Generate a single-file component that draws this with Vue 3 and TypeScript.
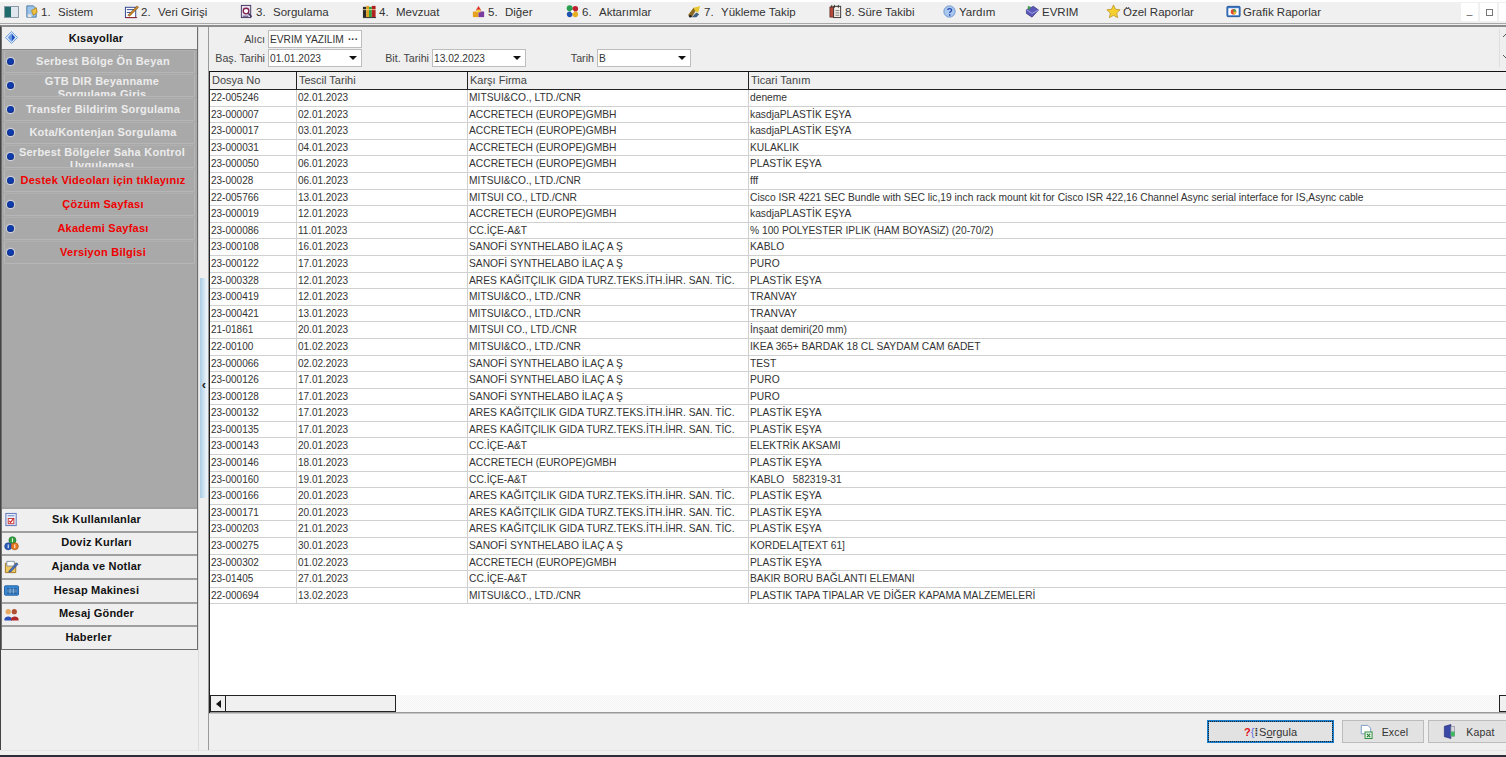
<script setup lang="ts">
interface MenuItem {
  icon: string
  num?: string
  label: string
}

interface Row {
  file: string
  date: string
  firm: string
  desc: string
}

const menu: MenuItem[] = [
  { icon: 'sistem', num: '1.', label: 'Sistem' },
  { icon: 'veri', num: '2.', label: 'Veri Girişi' },
  { icon: 'sorgu', num: '3.', label: 'Sorgulama' },
  { icon: 'mevzuat', num: '4.', label: 'Mevzuat' },
  { icon: 'diger', num: '5.', label: 'Diğer' },
  { icon: 'aktar', num: '6.', label: 'Aktarımlar' },
  { icon: 'yukleme', num: '7.', label: 'Yükleme Takip' },
  { icon: 'sure', label: '8. Süre Takibi' },
  { icon: 'yardim', label: 'Yardım' },
  { icon: 'evrim', label: 'EVRIM' },
  { icon: 'star', label: 'Özel Raporlar' },
  { icon: 'grafik', label: 'Grafik Raporlar' },
]

const shortcuts = [
  { label: 'Serbest Bölge Ön Beyan' },
  { label: 'GTB DIR Beyanname Sorgulama Giriş', clip: true },
  { label: 'Transfer Bildirim Sorgulama' },
  { label: 'Kota/Kontenjan Sorgulama' },
  { label: 'Serbest Bölgeler Saha Kontrol Uygulaması', clip: true },
  { label: 'Destek Videoları için tıklayınız', red: true },
  { label: 'Çözüm Sayfası', red: true },
  { label: 'Akademi Sayfası', red: true },
  { label: 'Versiyon Bilgisi', red: true },
]

const tools = [
  { icon: 'sik', label: 'Sık Kullanılanlar' },
  { icon: 'doviz', label: 'Doviz Kurları' },
  { icon: 'ajanda', label: 'Ajanda ve Notlar' },
  { icon: 'hesap', label: 'Hesap Makinesi' },
  { icon: 'mesaj', label: 'Mesaj Gönder' },
  { icon: '', label: 'Haberler' },
]

const MITSUI = 'MITSUI&CO., LTD./CNR'
const MITSUI2 = 'MITSUI CO., LTD./CNR'
const ACC = 'ACCRETECH (EUROPE)GMBH'
const SAN = 'SANOFİ SYNTHELABO İLAÇ A Ş'
const ARES = 'ARES KAĞITÇILIK GIDA TURZ.TEKS.İTH.İHR. SAN. TİC.'
const CC = 'CC.İÇE-A&T'
const PE = 'PLASTİK EŞYA'

const rows: Row[] = [
  { file: '22-005246', date: '02.01.2023', firm: MITSUI, desc: 'deneme' },
  { file: '23-000007', date: '02.01.2023', firm: ACC, desc: 'kasdjaPLASTİK EŞYA' },
  { file: '23-000017', date: '03.01.2023', firm: ACC, desc: 'kasdjaPLASTİK EŞYA' },
  { file: '23-000031', date: '04.01.2023', firm: ACC, desc: 'KULAKLIK' },
  { file: '23-000050', date: '06.01.2023', firm: ACC, desc: PE },
  { file: '23-00028', date: '06.01.2023', firm: MITSUI, desc: 'fff' },
  { file: '22-005766', date: '13.01.2023', firm: MITSUI2, desc: 'Cisco ISR 4221 SEC Bundle with SEC lic,19 inch rack mount kit for Cisco ISR 422,16 Channel Async serial interface for IS,Async cable' },
  { file: '23-000019', date: '12.01.2023', firm: ACC, desc: 'kasdjaPLASTİK EŞYA' },
  { file: '23-000086', date: '11.01.2023', firm: CC, desc: '% 100 POLYESTER IPLIK (HAM BOYASiZ) (20-70/2)' },
  { file: '23-000108', date: '16.01.2023', firm: SAN, desc: 'KABLO' },
  { file: '23-000122', date: '17.01.2023', firm: SAN, desc: 'PURO' },
  { file: '23-000328', date: '12.01.2023', firm: ARES, desc: PE },
  { file: '23-000419', date: '12.01.2023', firm: MITSUI, desc: 'TRANVAY' },
  { file: '23-000421', date: '13.01.2023', firm: MITSUI, desc: 'TRANVAY' },
  { file: '21-01861', date: '20.01.2023', firm: MITSUI2, desc: 'İnşaat demiri(20 mm)' },
  { file: '22-00100', date: '01.02.2023', firm: MITSUI, desc: 'IKEA 365+ BARDAK 18 CL SAYDAM CAM 6ADET' },
  { file: '23-000066', date: '02.02.2023', firm: SAN, desc: 'TEST' },
  { file: '23-000126', date: '17.01.2023', firm: SAN, desc: 'PURO' },
  { file: '23-000128', date: '17.01.2023', firm: SAN, desc: 'PURO' },
  { file: '23-000132', date: '17.01.2023', firm: ARES, desc: PE },
  { file: '23-000135', date: '17.01.2023', firm: ARES, desc: PE },
  { file: '23-000143', date: '20.01.2023', firm: CC, desc: 'ELEKTRİK AKSAMI' },
  { file: '23-000146', date: '18.01.2023', firm: ACC, desc: PE },
  { file: '23-000160', date: '19.01.2023', firm: CC, desc: 'KABLO   582319-31' },
  { file: '23-000166', date: '20.01.2023', firm: ARES, desc: PE },
  { file: '23-000171', date: '20.01.2023', firm: ARES, desc: PE },
  { file: '23-000203', date: '21.01.2023', firm: ARES, desc: PE },
  { file: '23-000275', date: '30.01.2023', firm: SAN, desc: 'KORDELA[TEXT 61]' },
  { file: '23-000302', date: '01.02.2023', firm: ACC, desc: PE },
  { file: '23-01405', date: '27.01.2023', firm: CC, desc: 'BAKIR BORU BAĞLANTI ELEMANI' },
  { file: '22-000694', date: '13.02.2023', firm: MITSUI, desc: 'PLASTIK TAPA TIPALAR VE DİĞER KAPAMA MALZEMELERİ' },
]

// 16x16 hand drawn toolbar glyphs
const icons: Record<string, string> = {
  sistem: '<path d="M3 2h7l3 3v9H3z" fill="#9cc4ea" stroke="#4a78a8"/><path d="M8 7l5-3 1 5-4 3z" fill="#f0c040" stroke="#b58a20"/><rect x="4" y="11" width="4" height="3" fill="#e6e6e6"/>',
  veri: '<rect x="1.5" y="3.5" width="11" height="11" fill="#fff" stroke="#2c3f8c"/><path d="M3 6h8M3 9h5" stroke="#2c3f8c"/><path d="M4 12L14 2l1.5 1.5L6 13z" fill="#c8862c" stroke="#7a4a10" stroke-width=".6"/><path d="M2 14.5h12" stroke="#a02020"/>',
  sorgu: '<rect x="2.5" y="1.5" width="10" height="13" fill="#e8e2f0" stroke="#403060"/><circle cx="7.5" cy="7.5" r="3" fill="#fff" stroke="#802050" stroke-width="1.4"/><path d="M10 10l3.5 3.5" stroke="#403060" stroke-width="1.6"/><path d="M4 13h6" stroke="#403060"/>',
  mevzuat: '<rect x="1" y="3" width="3.5" height="11" fill="#2a2a2a"/><rect x="4.5" y="2" width="3" height="12" fill="#e0a020"/><rect x="7.5" y="3" width="3" height="11" fill="#30a040"/><rect x="10.5" y="2" width="4" height="12" fill="#b02020"/><path d="M1 14.5h14" stroke="#222"/><path d="M1 6h14" stroke="#f4e8a0" stroke-width=".8"/>',
  diger: '<path d="M8 2l3 5H5z" fill="#e23030"/><rect x="2" y="8" width="6" height="6" fill="#e8a020"/><rect x="8" y="8" width="6" height="6" fill="#7a3aa0"/><rect x="6" y="6" width="4" height="3" fill="#f4d040"/>',
  aktar: '<circle cx="5" cy="4.5" r="3.2" fill="#28a050"/><circle cx="11" cy="5" r="3" fill="#c02030"/><circle cx="5" cy="11" r="3" fill="#2050b0"/><circle cx="11" cy="11" r="3" fill="#e8b020"/><circle cx="8" cy="8" r="1.6" fill="#fff"/>',
  yukleme: '<path d="M1 12l6-8 3 2-5 8z" fill="#8a6a20"/><path d="M7 4l7-2-2 7-3-1z" fill="#e8c830"/><path d="M5 14l5-5 3 2-3 3z" fill="#406080"/><circle cx="3.5" cy="13" r="1.4" fill="#202020"/>',
  sure: '<path d="M2 3h4v11H2z" fill="#b84a3a" stroke="#4a2018" stroke-width=".7"/><rect x="6" y="2.5" width="7.5" height="12" fill="#f4f0e8" stroke="#3a3030"/><path d="M4 1v3M7 1v3M11 1v3" stroke="#333"/><path d="M8 7h4M8 9.5h4M8 12h4" stroke="#777"/>',
  yardim: '<circle cx="8" cy="8" r="6" fill="#a8c8f0" stroke="#6a90c8"/><path d="M6 6.4c.3-2 4.4-2 4.2.2 0 1.5-2 1.4-2 3" fill="none" stroke="#2848a8" stroke-width="1.4"/><circle cx="8.2" cy="11.6" r=".9" fill="#2848a8"/>',
  evrim: '<path d="M1.5 6L9 2.5l5.5 4-7 7.5-6-4z" fill="#5a58b8" stroke="#2e2c70" stroke-width=".7"/><path d="M1.5 6l6 4 7-3.5" fill="none" stroke="#a8a8e8"/><path d="M3 2l3 1-1 3-2-1z" fill="#3a9a4a"/>',
  star: '<path d="M8 1l2.1 4.6 5 .6-3.7 3.4 1 5L8 12.1l-4.4 2.5 1-5L.9 6.2l5-.6z" fill="#f6d030" stroke="#b89020" stroke-width=".8"/>',
  grafik: '<rect x="1" y="2.5" width="14" height="11" rx="1" fill="#3a78c8" stroke="#285a98"/><rect x="2.5" y="4.5" width="11" height="7.5" fill="#fff"/><circle cx="8" cy="8.2" r="3" fill="#e04830"/><path d="M8 8.2V5.2a3 3 0 0 1 3 3z" fill="#40a850"/><path d="M8 8.2h3a3 3 0 0 1-3 3z" fill="#e8c030"/>',
  sik: '<rect x="2" y="1.5" width="11" height="13" fill="#e8eef8" stroke="#5a70b8"/><path d="M4 4h7" stroke="#6080c8"/><rect x="4.5" y="7" width="6" height="5.5" fill="#fff" stroke="#c03030"/><path d="M5.5 9.5l1.5 1.5 3.5-4.5" fill="none" stroke="#d02020" stroke-width="1.2"/>',
  doviz: '<circle cx="9" cy="4.5" r="3.8" fill="#30a040" stroke="#186828" stroke-width=".6"/><circle cx="4.5" cy="11" r="3.8" fill="#2a5ab8" stroke="#183a80" stroke-width=".6"/><circle cx="11.5" cy="11" r="3.8" fill="#e87820" stroke="#a04a10" stroke-width=".6"/><path d="M9 2.5v4M4.5 9v4M11.5 9v4" stroke="#fff"/>',
  ajanda: '<path d="M1.5 4.5h11v10h-11z" fill="#f0c860" stroke="#a07820"/><path d="M3 2.5h8v5H3z" fill="#fff" stroke="#8090a0"/><path d="M6 12l7.5-8 1.5 1.5-7.5 8L5 14z" fill="#4a70c0" stroke="#283c78" stroke-width=".6"/>',
  hesap: '<rect x=".5" y="3" width="15" height="10" rx="1" fill="#3888d8" stroke="#2060a0"/><rect x="3" y="5.5" width="11" height="6" fill="#205a98"/><path d="M3 7.5h11M3 9.5h11M6.5 5.5v6M10 5.5v6" stroke="#a8d0f0" stroke-width=".7"/>',
  mesaj: '<circle cx="4.5" cy="5" r="2.8" fill="#e8a860"/><path d="M.5 13c0-4 8-4 8 0v1.5h-8z" fill="#2a50b8"/><circle cx="11" cy="5" r="2.8" fill="#b05030"/><path d="M7.5 13c0-4 8-4 8 0v1.5h-8z" fill="#b02828"/>',
  excel: '<path d="M3.5 1.5h7l3 3v6h-10z" fill="#fff" stroke="#7a9ac8"/><rect x="7.5" y="8.5" width="7.5" height="7" fill="#e8f4e8" stroke="#2a8a3a"/><path d="M9.5 10.5l3.5 3.5M13 10.5L9.5 14" stroke="#208030" stroke-width="1.2"/>',
  kapat: '<path d="M2.5 2.5l7-2v15l-7-2z" fill="#3a48a8" stroke="#20286a" stroke-width=".6"/><rect x="9.5" y="2.5" width="4" height="11" fill="#d8d8e0" stroke="#7a7a90" stroke-width=".6"/><rect x="9.5" y="8" width="4" height="5" fill="#40b860"/>',
}
</script>

<template>
  <div class="app">
    <header class="menubar">
      <span class="win-icon"><i /></span>
      <nav class="menu">
        <a v-for="item in menu" :key="item.label" class="menu-item">
          <svg class="ico" viewBox="0 0 16 16" v-html="icons[item.icon]" />
          <span v-if="item.num" class="menu-num">{{ item.num }}</span>
          <span>{{ item.label }}</span>
        </a>
      </nav>
      <div class="win-btns">
        <span>_</span>
        <span class="restore" />
        <span />
      </div>
    </header>

    <main class="body">
      <aside class="sidebar">
        <div class="side-head">
          <svg class="diamond" viewBox="0 0 14 14">
            <path d="M7 .5L13.5 7 7 13.5.5 7z" fill="#d8e8fa" stroke="#6a9ad8" />
            <path d="M7 2.5L11 7l-4 4.5z" fill="#1c50c0" />
            <path d="M7 2.5L3 7l4 4.5z" fill="#6a98e0" />
          </svg>
          Kısayollar
        </div>
        <div class="side-list">
          <a
            v-for="s in shortcuts"
            :key="s.label"
            class="side-item"
            :class="{ red: s.red, clip: s.clip }"
          >
            <span class="bullet" />
            <span class="side-text">{{ s.label }}</span>
          </a>
        </div>
        <div class="side-tools">
          <a v-for="t in tools" :key="t.label" class="tool" :class="{ bare: !t.icon }">
            <svg v-if="t.icon" class="tool-ico" viewBox="0 0 16 16" v-html="icons[t.icon]" />
            <span>{{ t.label }}</span>
          </a>
        </div>
      </aside>

      <div class="splitter">
        <div class="split-track"><span class="chev">‹</span></div>
      </div>

      <section class="panel">
        <form class="filters" @submit.prevent>
          <div class="filter-row">
            <label class="lbl-first">Alıcı</label>
            <div class="field"><span class="val">EVRIM YAZILIM</span><span class="dots">···</span></div>
          </div>
          <div class="filter-row">
            <label class="lbl-first">Baş. Tarihi</label>
            <div class="field"><span class="val">01.01.2023</span><span class="arrow" /></div>
            <label class="lbl-bit">Bit. Tarihi</label>
            <div class="field"><span class="val">13.02.2023</span><span class="arrow" /></div>
            <label class="lbl-tarih">Tarih</label>
            <div class="field"><span class="val">B</span><span class="arrow" /></div>
          </div>
          <div class="spin">
            <svg viewBox="0 0 8 34" width="8" height="34">
              <path d="M1 8l3-3 3 3M1 26l3 3 3-3" fill="none" stroke="#555" />
            </svg>
          </div>
        </form>

        <div class="grid">
          <div class="grid-head">
            <div class="cell">Dosya No</div>
            <div class="cell">Tescil Tarihi</div>
            <div class="cell">Karşı Firma</div>
            <div class="cell">Ticari Tanım</div>
          </div>
          <div class="grid-body">
            <div v-for="r in rows" :key="r.file" class="grid-row">
              <div class="cell num">{{ r.file }}</div>
              <div class="cell num">{{ r.date }}</div>
              <div class="cell">{{ r.firm }}</div>
              <div class="cell desc">{{ r.desc }}</div>
            </div>
          </div>
          <div class="hscroll">
            <span class="sb-btn"><i class="tri-l" /></span>
            <span class="sb-thumb" />
            <span class="sb-btn end" />
          </div>
        </div>

        <footer class="actions">
          <button class="btn primary" type="button">
            <span class="q">?</span><span class="brace">{</span><span class="pipe">⁞</span>
            <span>S<u>o</u>rgula</span>
          </button>
          <button class="btn excel" type="button">
            <svg class="ico" viewBox="0 0 16 16" v-html="icons.excel" />
            <span>Excel</span>
          </button>
          <button class="btn last" type="button">
            <svg class="ico" viewBox="0 0 16 16" v-html="icons.kapat" />
            <span>Kapat</span>
          </button>
        </footer>
      </section>
    </main>
    <div class="statusbar" />
  </div>
</template>

<style>
html,
body {
  margin: 0;
  overflow: hidden;
  background: #f0f0f0;
}
</style>

<style scoped>
.app {
  width: 1506px;
  height: 757px;
  display: flex;
  flex-direction: column;
  background: #efefef;
  color: #222;
  font-family: "Liberation Sans", Arial, sans-serif;
  font-size: 10.25px;
  overflow: hidden;
}

.menubar {
  height: 24px;
  flex: none;
  display: flex;
  box-sizing: border-box;
  padding: 0 0 2px 4px;
  background: #f0f0f0;
  border-top: 2px solid #fff;
  border-bottom: 1px solid #a8a8a8;
  align-items: center;
  margin-bottom: 1px;
}
.win-icon {
  width: 15px;
  height: 12px;
  box-sizing: border-box;
  border: 1px solid #8a9aa8;
  background: #dfe6ee;
  flex: none;
  display: flex;
}
.win-icon i {
  width: 6px;
  background: #1f6a6a;
}
.menu {
  margin-left: 5px;
  flex: 1;
  display: grid;
  grid-template-columns: 100px 115px 123px 109px 94px 122px 141px 114px 83px 81px 120px 1fr;
  font-size: 11.5px;
  color: #333;
  white-space: nowrap;
}
.menu-item {
  display: flex;
  align-items: center;
}
.ico {
  width: 15px;
  height: 15px;
  flex: none;
  margin-right: 2px;
}
.menu-num {
  width: 17px;
  flex: none;
}
.win-btns {
  display: flex;
  gap: 2px;
  width: 45px;
  height: 18px;
  flex: none;
  margin-top: 1px;
  overflow: hidden;
}
.win-btns span {
  width: 17px;
  flex: none;
  background: #fff;
  color: #555;
  font-size: 10px;
  text-align: center;
  line-height: 15px;
}
.restore {
  position: relative;
}
.restore::after {
  content: "";
  position: absolute;
  left: 6px;
  top: 6px;
  width: 5px;
  height: 5px;
  border: 1px solid #777;
}

.body {
  flex: 1;
  min-height: 0;
  display: flex;
  border-top: 2px solid #8c8c8c;
  border-left: 1px solid #444;
}

.sidebar {
  width: 197px;
  height: 623px;
  flex: none;
  box-sizing: border-box;
  display: flex;
  flex-direction: column;
  background: #a9a9a9;
  border: 1px solid #6e6e6e;
  border-top: none;
}
.side-head {
  height: 23px;
  flex: none;
  display: flex;
  align-items: center;
  justify-content: center;
  position: relative;
  background: #efefef;
  font-size: 11px;
  font-weight: 700;
  letter-spacing: .2px;
  color: #111;
  border-bottom: 1px solid #8c8c8c;
  box-sizing: border-box;
  padding-right: 7px;
}
.diamond {
  position: absolute;
  left: 3px;
  top: 4px;
  width: 13px;
  height: 13px;
}
.side-list {
  flex: 1;
  display: flex;
  flex-direction: column;
  padding: 0 2px;
  gap: 1px;
}
.side-item {
  height: 22.85px;
  flex: none;
  box-sizing: border-box;
  display: flex;
  align-items: center;
  border: 1px solid #b6b6b6;
  border-top-color: #b0b0b0;
  overflow: hidden;
  font-size: 11px;
  font-weight: 700;
  color: #ececec;
  letter-spacing: .25px;
  border-radius: 2px;
}
.side-item.red {
  color: #f00000;
}
.bullet {
  width: 7px;
  height: 7px;
  margin-left: 2px;
  flex: none;
  border-radius: 50%;
  background: radial-gradient(circle at 50% 45%, #0e3cb0 35%, #061e60 100%);
  box-shadow: 0 0 1px 1px #d8d8e8;
}
.side-text {
  flex: 1;
  text-align: center;
  line-height: 13px;
  padding-right: 2px;
}
.side-item.clip {
  align-items: flex-start;
}
.side-item.clip .bullet {
  margin-top: 7px;
}
.side-item.clip .side-text {
  padding: 0 6px 0 2px;
}
.side-tools {
  flex: none;
  background: #efefef;
  margin-top: auto;
}
.tool {
  height: 23.7px;
  box-sizing: border-box;
  display: flex;
  align-items: center;
  position: relative;
  justify-content: center;
  border-top: 2px solid #a0a0a0;
  padding: 0 6px 2px 0;
  font-size: 11px;
  font-weight: 700;
  letter-spacing: .2px;
  color: #111;
}
.tool.bare {
  padding-right: 22px;
}
.tool-ico {
  position: absolute;
  left: 2px;
  top: 3px;
  width: 15px;
  height: 15px;
}

.splitter {
  width: 10px;
  flex: none;
  position: relative;
  box-sizing: border-box;
  border-left: 1px solid #dcdcdc;
}
.split-track {
  position: absolute;
  left: 1px;
  right: 0;
  top: 251px;
  height: 220px;
  background: linear-gradient(90deg, #a9cbe4, #e8f2f8 80%);
  display: flex;
  align-items: center;
  justify-content: center;
}
.chev {
  font-size: 13px;
  font-weight: 700;
  color: #222;
  line-height: 1;
  margin-bottom: 7px;
}

.panel {
  flex: 1;
  min-width: 0;
  display: flex;
  flex-direction: column;
  border-left: 1px solid #9a9a9a;
}
.filters {
  height: 44px;
  flex: none;
  box-sizing: border-box;
  padding-top: 3px;
  position: relative;
  font-size: 10.7px;
  color: #444;
}
.filter-row {
  display: flex;
  align-items: center;
  height: 18px;
  margin-bottom: 1px;
}
.filter-row label {
  text-align: right;
  padding-right: 3px;
  box-sizing: border-box;
  flex: none;
}
.lbl-first {
  width: 59px;
}
.lbl-bit {
  width: 70px;
}
.lbl-tarih {
  width: 71px;
}
.field {
  width: 94px;
  height: 18px;
  flex: none;
  display: flex;
  align-items: center;
  justify-content: space-between;
  box-sizing: border-box;
  background: #fff;
  border: 1px solid #bdbdbd;
  padding-left: 1px;
  font-size: 10.2px;
  color: #333;
  white-space: nowrap;
}
.dots {
  font-weight: 700;
  padding-right: 3px;
  font-size: 10px;
}
.arrow {
  border-left: 4px solid transparent;
  border-right: 4px solid transparent;
  border-top: 4px solid #111;
  margin-right: 4px;
}
.spin {
  position: absolute;
  right: 0;
  top: 2px;
  width: 7px;
  height: 38px;
  box-sizing: border-box;
  padding-left: 2px;
  overflow: hidden;
  border-left: 1px solid #dedede;
}

.grid {
  flex: 1;
  min-height: 0;
  display: flex;
  flex-direction: column;
  border-top: 1px solid #111;
  border-left: 1px solid #222;
  background: #fff;
}
.grid-head,
.grid-row {
  display: grid;
  grid-template-columns: 87px 171px 281px 1fr;
}
.grid-head {
  height: 18px;
  flex: none;
  box-sizing: border-box;
  background: #f0f0f0;
  border-bottom: 1px solid #222;
  font-size: 11px;
  color: #444;
}
.grid-head .cell {
  border-right: 1px solid #222;
  padding-left: 2px;
  line-height: 17px;
}
.grid-head .cell:last-child {
  border-right: none;
}
.grid-body {
  flex: 1;
  min-height: 0;
  overflow: hidden;
}
.grid-row {
  height: 16.6px;
  box-sizing: border-box;
  border-bottom: 1px solid #d0d0d0;
  color: #333;
}
.cell {
  padding-left: 1px;
  line-height: 15.6px;
  border-right: 1px solid #d0d0d0;
  white-space: pre;
  overflow: hidden;
}
.cell.num {
  font-size: 10px;
}
.desc {
  border-right: none;
}
.hscroll {
  height: 18px;
  flex: none;
  display: flex;
  box-sizing: border-box;
  border-bottom: 1px solid #999;
  background: repeating-conic-gradient(#f4f4f4 0 25%, #fcfcfc 0 50%) 0 0 / 2px 2px;
}
.sb-btn {
  width: 16px;
  flex: none;
  box-sizing: border-box;
  border: 1px solid #222;
  background: #f0f0f0;
  display: flex;
  align-items: center;
  justify-content: center;
}
.sb-btn.end {
  width: 7px;
  border-right: none;
  margin-left: auto;
}
.tri-l {
  border-top: 4px solid transparent;
  border-bottom: 4px solid transparent;
  border-right: 5px solid #111;
}
.sb-thumb {
  width: 170px;
  flex: none;
  box-sizing: border-box;
  border: 1px solid #222;
  border-left: none;
  background: #f0f0f0;
}
.actions {
  height: 37px;
  flex: none;
  box-sizing: border-box;
  display: flex;
  align-items: flex-start;
  padding-top: 6px;
  border-top: 1px solid #c4c4c4;
  justify-content: flex-end;
}
.btn {
  height: 23px;
  padding: 0;
  display: flex;
  align-items: center;
  justify-content: center;
  gap: 7px;
  background: #e2e2e2;
  border: 1px solid #bcbcbc;
  color: #333;
  font: inherit;
  font-size: 10.5px;
  letter-spacing: .2px;
}
.btn.primary {
  width: 127px;
  height: 23px;
  gap: 0;
  margin-right: 8px;
  border: 2px solid #1b7fce;
  outline: 1px dotted #222;
  outline-offset: -2px;
  font-size: 11px;
  letter-spacing: 0;
}
.btn.excel {
  width: 82px;
  margin-right: 4px;
}
.btn.last {
  width: 78px;
  border-right: none;
  padding-left: 2px;
}
.q {
  color: #e01020;
  font-weight: 700;
}
.brace {
  color: #5a70e0;
}
.pipe {
  font-weight: 700;
  margin-right: 1px;
}
.statusbar {
  height: 7px;
  flex: none;
  box-sizing: border-box;
  border-top: 1px solid #e4e4e4;
  border-bottom: 2px solid #2e2e38;
  background: #f0f0f0;
}
</style>
